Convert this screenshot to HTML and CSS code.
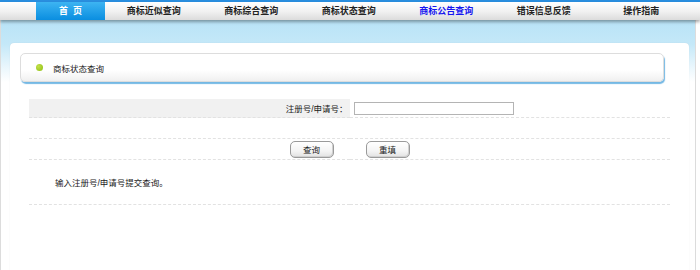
FILE: index.html
```html
<!DOCTYPE html>
<html lang="zh-CN">
<head>
  <meta charset="UTF-8" />
  <title>商标状态查询</title>
  <link rel="stylesheet" href="styles.css">
</head>
<body>
  <div class="topline"></div>
  <nav class="nav">
    <a href="#" class="home">首&nbsp;&nbsp;页</a>
    <a href="#">商标近似查询</a>
    <a href="#">商标综合查询</a>
    <a href="#">商标状态查询</a>
    <a href="#" class="current">商标公告查询</a>
    <a href="#">错误信息反馈</a>
    <a href="#">操作指南</a>
  </nav>

  <div class="page">
    <div class="panel">
      <div class="title-box">
        <span class="dot"></span>
        <span>商标状态查询</span>
      </div>

      <table class="form">
        <tr class="row-input">
          <td class="label">注册号/申请号：</td>
          <td class="value"><input type="text" class="txt"></td>
        </tr>
        <tr class="row-empty">
          <td colspan="2"></td>
        </tr>
        <tr class="row-buttons">
          <td colspan="2">
            <div class="buttons">
              <button type="button">查询</button>
              <button type="button">重填</button>
            </div>
          </td>
        </tr>
        <tr class="row-hint">
          <td colspan="2">输入注册号/申请号提交查询。</td>
        </tr>
      </table>
    </div>
  </div>
</body>
</html>
```

FILE: styles.css
```css
body {
  margin: 0;
  padding: 0;
  width: 700px;
  height: 270px;
  overflow: hidden;
  background: #fff;
  font-family: "Liberation Sans", "Noto Sans CJK SC", sans-serif;
  font-size: 8.5px;
  color: #1a1a1a;
}

.topline {
  height: 2px;
  background: #2a8fe0;
}

.nav {
  position: relative;
  z-index: 2;
  display: flex;
  height: 18px;
  padding-left: 36px;
  background: linear-gradient(to bottom, #ffffff, #f2f2f2 50%, #dcdcdc);
  box-shadow: 0 2px 3px rgba(0, 0, 0, 0.35);
}

.nav a {
  width: 97.5px;
  line-height: 18px;
  text-align: center;
  text-decoration: none;
  font-weight: bold;
  font-size: 9px;
  color: #222;
}

.nav a.home {
  width: 69px;
  color: #fff;
  background: linear-gradient(to bottom, #3db4f2, #0a8ee0);
}

.nav a.current {
  color: #1616f0;
}

.page {
  width: 696px;
  height: 250px;
  padding-top: 23px;
  border-left: 1px solid #dcdcdc;
  border-right: 1px solid #dcdcdc;
  background: linear-gradient(to bottom, #b8e3f7 0, #c4e8f8 24px, #e6f5fc 45px, #ffffff 62px);
  box-sizing: border-box;
}

.panel {
  width: 679px;
  height: 240px;
  margin-left: 9px;
  padding-top: 10px;
  background: #fff;
  border-radius: 4px 4px 0 0;
  box-shadow: 0 0 1px rgba(0, 0, 0, 0.12);
  box-sizing: border-box;
}

.title-box {
  display: flex;
  align-items: center;
  width: 644px;
  height: 29px;
  margin-left: 10px;
  padding-left: 15px;
  border: 1px solid #dddddd;
  border-radius: 5px;
  background: linear-gradient(to bottom, #ffffff, #ffffff 60%, #f0f0f0);
  box-shadow: 1px 2px 1px #74b8e4;
  box-sizing: border-box;
  color: #222;
}

.dot {
  width: 7px;
  height: 7px;
  margin-right: 10px;
  border-radius: 50%;
  background: radial-gradient(circle at 35% 35%, #c4e04a, #8cbf10);
}

.form {
  width: 641px;
  margin: 17px 0 0 19px;
  border-collapse: collapse;
}

.form td {
  padding: 0;
  border-bottom: 1px dashed #e2e2e2;
}

.row-input td {
  height: 18px;
}

.form .label {
  width: 50%;
  padding-right: 2px;
  text-align: right;
  background: #f1f1f1;
}

.form .value {
  padding-left: 4px;
}

.txt {
  display: block;
  width: 160px;
  height: 13px;
  margin: 0;
  padding: 0;
  border: 1px solid #b4b4b4;
  box-sizing: border-box;
}

.row-empty td {
  height: 20px;
}

.row-buttons td {
  height: 20px;
}

.buttons {
  display: flex;
  justify-content: center;
  gap: 32px;
}

.buttons button {
  width: 44px;
  height: 17px;
  padding: 0;
  border: 1px solid #9a9a9a;
  border-radius: 5px;
  background: linear-gradient(to bottom, #ffffff, #f4f4f4 60%, #e2e2e2);
  box-shadow: inset -1px -1px 0 #d0d0d0;
  font-family: inherit;
  font-size: 8.5px;
  color: #222;
}

.row-hint td {
  height: 44px;
  padding-left: 26px;
}
```
